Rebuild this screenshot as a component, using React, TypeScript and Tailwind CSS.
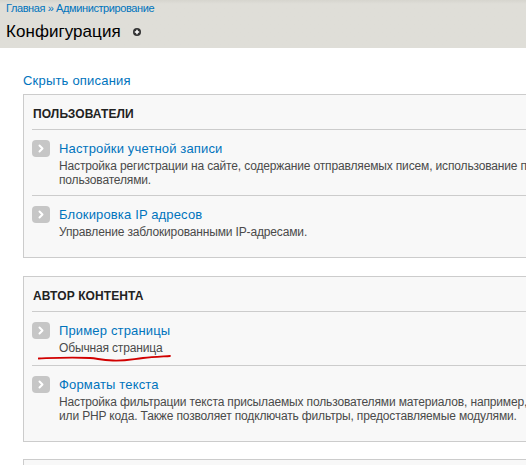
import React from 'react';

const font = { fontFamily: '"Liberation Sans", Arial, sans-serif' };

function ArrowIcon() {
  return (
    <svg width="18" height="17" viewBox="0 0 18 17" className="shrink-0">
      <rect x="0" y="0" width="18" height="17" rx="4" fill="#c6c6c6" />
      <path d="M7.5 5.5 L10.5 8.5 L7.5 11.5" stroke="#fff" strokeWidth="2" fill="none" strokeLinecap="round" strokeLinejoin="round" />
    </svg>
  );
}

function Item({ title, desc, last, mark }: { title: string; desc: React.ReactNode; last?: boolean; mark?: boolean }) {
  return (
    <div
      className={`relative flex gap-[9px] pt-[9px] ${mark ? 'pb-[10px]' : 'pb-[8px]'} ${last ? '' : 'border-b border-[#cccccc]'}`}
    >
      <div className="pt-[1px]">
        <ArrowIcon />
      </div>
      <div>
        <div className="text-[13px] leading-[19px] tracking-[0.15px] text-[#0074bd]">{title}</div>
        <div className="mt-[1px] text-[12px] leading-[14px] tracking-[-0.15px] text-[#4a4a4a]">{desc}</div>
      </div>
      {mark && (
        <svg className="absolute left-[6px] top-[39px]" width="135" height="12" viewBox="0 0 135 12">
          <path
            d="M0.5 7.5 C 15 7, 30 6, 52 7 C 60 7.5, 62 9, 75 9.5 C 88 10, 95 8, 105 7 C 115 6, 125 5.5, 132 5"
            stroke="#d10000"
            strokeWidth="1.8"
            fill="none"
            strokeLinecap="round"
          />
        </svg>
      )}
    </div>
  );
}

function Panel({ heading, children }: { heading: string; children: React.ReactNode }) {
  return (
    <div className="border border-[#cccccc] bg-[#f8f8f8] pl-[8px] pb-[10px]">
      <div className="border-b border-[#cccccc] pt-[11px] pb-[7px] pl-[1px] text-[12px] leading-[16px] font-bold tracking-[0.1px] text-[#222]">
        {heading}
      </div>
      {children}
    </div>
  );
}

export default function App() {
  return (
    <div className="w-[526px] h-[465px] overflow-hidden bg-white" style={font}>
      <div className="w-[640px]">
        <div className="h-[48px] px-[6px] pt-[2px] bg-gradient-to-b from-[#d6d5ce] to-[#dfded8] to-[4px]">
          <div className="text-[11px] leading-[13px] tracking-[-0.4px] text-[#0074bd]">
            Главная » Администрирование
          </div>
          <div className="mt-[5px] flex items-center gap-[12px]">
            <span className="text-[17px] leading-[24px] tracking-[0.05px] text-black">Конфигурация</span>
            <svg width="8" height="8" viewBox="0 0 8 8">
              <circle cx="4" cy="4" r="4" fill="#333" />
              <path d="M4 1.8 V6.2 M1.8 4 H6.2" stroke="#fff" strokeWidth="1.5" />
            </svg>
          </div>
        </div>
        <div className="pl-[23px] pt-[25px]">
          <div className="text-[13px] leading-[16px] tracking-[0.2px] text-[#0074bd] mb-[5px]">Скрыть описания</div>
          <Panel heading="ПОЛЬЗОВАТЕЛИ">
            <Item
              title="Настройки учетной записи"
              desc={
                <>
                  Настройка регистрации на сайте, содержание отправляемых писем, использование п
                  <br />
                  пользователями.
                </>
              }
            />
            <Item title="Блокировка IP адресов" desc="Управление заблокированными IP-адресами." last />
          </Panel>
          <div className="h-[18px]" />
          <Panel heading="АВТОР КОНТЕНТА">
            <Item title="Пример страницы" desc="Обычная страница" mark />
            <Item
              title="Форматы текста"
              desc={
                <>
                  Настройка фильтрации текста присылаемых пользователями материалов, например,
                  <br />
                  или PHP кода. Также позволяет подключать фильтры, предоставляемые модулями.
                </>
              }
              last
            />
          </Panel>
          <div className="h-[17px]" />
          <div className="border border-[#cccccc] bg-[#f8f8f8] h-[60px]" />
        </div>
      </div>
    </div>
  );
}
